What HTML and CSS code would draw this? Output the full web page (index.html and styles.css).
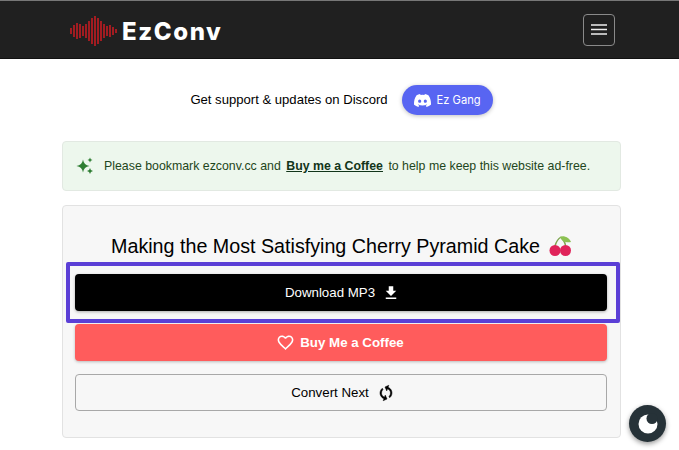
FILE: index.html
```html
<!DOCTYPE html>
<html lang="en">
<head>
    <meta charset="UTF-8">
    <meta name="viewport" content="width=device-width, initial-scale=1.0">
    <title>EzConv</title>
    <link rel="stylesheet" href="styles.css">
</head>
<body>
    <header class="topbar">
        <a href="#" class="logo">
            <svg class="logo-wave" width="48" height="30" viewBox="0 0 48 30">
                <path d="M1 12V18M4 9V21M7 7V23M10 8V22M13 10V20M16 8V22M19 5V25M22 2V28M25 0V30M28 2V28M31 5V25M34 8V22M37 10V20M40 9V21M43 11V19M46 13V17"/>
            </svg>
            <span class="logo-text">EzConv</span>
        </a>
        <button class="menu-btn" aria-label="Menu">
            <svg width="16" height="11" viewBox="0 0 16 11"><path d="M0 1H16M0 5.500H16M0 10H16"/></svg>
        </button>
    </header>

    <main class="page">
        <section class="support">
            <span class="support-text">Get support &amp; updates on Discord</span>
            <a href="#" class="discord-pill">
                <svg width="17" height="13" viewBox="0 0 127.14 96.36"><path d="M107.7,8.07A105.15,105.15,0,0,0,81.47,0a72.06,72.06,0,0,0-3.36,6.83A97.68,97.68,0,0,0,49,6.83,72.37,72.37,0,0,0,45.64,0,105.89,105.89,0,0,0,19.39,8.09C2.79,32.65-1.71,56.6.54,80.21h0A105.73,105.73,0,0,0,32.71,96.36,77.7,77.7,0,0,0,39.6,85.25a68.42,68.42,0,0,1-10.85-5.18c.91-.66,1.8-1.34,2.66-2a75.57,75.57,0,0,0,64.32,0c.87.71,1.76,1.39,2.66,2a68.68,68.68,0,0,1-10.87,5.19,77,77,0,0,0,6.89,11.1A105.25,105.25,0,0,0,126.6,80.22h0C129.24,52.84,122.09,29.11,107.7,8.07ZM42.45,65.69C36.18,65.69,31,60,31,53s5-12.74,11.43-12.74S54,46,53.89,53,48.84,65.69,42.45,65.69Zm42.24,0C78.41,65.69,73.25,60,73.25,53s5-12.74,11.44-12.74S96.23,46,96.12,53,91.08,65.69,84.69,65.69Z"/></svg>
                Ez Gang
            </a>
        </section>

        <section class="notice">
            <svg class="notice-icon" width="20" height="20" viewBox="0 0 20 20"><path d="M8 3.500Q8.800 9.200 14.500 10 8.800 10.800 8 16.500 7.200 10.800 1.500 10 7.200 9.200 8 3.500zM15 1.500Q15.300 3.700 17.500 4 15.300 4.300 15 6.500 14.700 4.300 12.500 4 14.700 3.700 15 1.500zM15 12Q15.400 14.600 18 15 15.400 15.400 15 18 14.600 15.400 12 15 14.600 14.600 15 12z"/></svg>
            <p>Please bookmark ezconv.cc and <a href="#">Buy me a Coffee</a> to help me keep this website ad-free.</p>
        </section>

        <section class="card">
            <h1>Making the Most Satisfying Cherry Pyramid Cake
                <svg class="cherry" width="22" height="22" viewBox="0 0 22 22">
                    <path class="stem" d="M6 11C7 7 9 4 12 2M16.500 11C16.500 8 14.500 5 12 2"/>
                    <path class="leaf" d="M11 2C14 0 20 2 22 7 18 8 13 7 11 2z"/>
                    <circle class="fruit" cx="6" cy="15.500" r="5.500"/>
                    <circle class="fruit" cx="16.500" cy="15.500" r="5.500"/>
                </svg>
            </h1>
            <div class="actions">
                <button class="btn btn-download">
                    Download MP3
                    <svg width="18" height="18" viewBox="0 0 24 24"><path d="M5 20h14v-2H5v2zM19 9h-4V3H9v6H5l7 7 7-7z"/></svg>
                    <span class="highlight"></span>
                </button>
                <button class="btn btn-coffee">
                    <svg width="19" height="19" viewBox="0 0 24 24"><path d="M16.500 3c-1.740 0-3.410.81-4.500 2.090C10.910 3.810 9.240 3 7.500 3 4.420 3 2 5.420 2 8.500c0 3.780 3.400 6.860 8.550 11.540L12 21.350l1.450-1.320C18.600 15.360 22 12.280 22 8.500 22 5.420 19.580 3 16.500 3zm-4.400 15.550l-.1.1-.1-.1C7.140 14.240 4 11.390 4 8.500 4 6.500 5.500 5 7.500 5c1.540 0 3.040.99 3.570 2.360h1.870C13.460 5.990 14.960 5 16.500 5c2 0 3.500 1.500 3.500 3.500 0 2.890-3.140 5.740-7.900 10.050z"/></svg>
                    Buy Me a Coffee
                </button>
                <button class="btn btn-next">
                    Convert Next
                    <svg class="sync-icon" width="18" height="18" viewBox="0 0 24 24"><path d="M12 4V1L8 5l4 4V6c3.310 0 6 2.690 6 6 0 1.010-.25 1.970-.7 2.800l1.460 1.460C19.540 15.030 20 13.570 20 12c0-4.420-3.580-8-8-8zm0 14c-3.310 0-6-2.690-6-6 0-1.010.25-1.970.7-2.800L5.240 7.740C4.460 8.970 4 10.430 4 12c0 4.420 3.580 8 8 8v3l4-4-4-4v3z"/></svg>
                </button>
            </div>
        </section>
    </main>

    <button class="theme-btn" aria-label="Dark mode">
        <svg width="22" height="22" viewBox="0 0 22 22">
            <circle class="moon" cx="11" cy="11" r="9.500"/>
            <circle class="bite" cx="15" cy="5.500" r="5.500"/>
        </svg>
    </button>
</body>
</html>
```

FILE: styles.css
```css
* {
    box-sizing: border-box;
}

html, body {
    height: 100%;
}

body {
    font-family: "Liberation Sans", Arial, sans-serif;
    margin: 0;
    padding: 0;
    background-color: #fff;
    color: #000;
    overflow: hidden;
}

a {
    color: inherit;
}

/* header */
.topbar {
    height: 59px;
    padding: 0 64px 0 70px;
    display: flex;
    align-items: center;
    justify-content: space-between;
    background-color: #202020;
    border-top: 1px solid #777;
    border-bottom: 1px solid #111;
}

.logo {
    padding-top: 3px;
    display: flex;
    align-items: center;
    gap: 4px;
    text-decoration: none;
}

.logo-wave path {
    fill: none;
    stroke: #b01c22;
    stroke-width: 1.800;
}

.logo-text {
    font-family: Inter, sans-serif;
    font-size: 24px;
    font-weight: 800;
    letter-spacing: 1.600px;
    color: #fff;
}

.menu-btn {
    width: 32px;
    height: 32px;
    padding: 0;
    display: flex;
    align-items: center;
    justify-content: center;
    background: none;
    border: 1px solid #8a8a8a;
    border-radius: 4px;
}

.menu-btn path {
    fill: none;
    stroke: #eee;
    stroke-width: 1.500;
}

/* main */
.page {
    padding: 0 58px 0 62px;
}

.support {
    height: 82px;
    display: flex;
    align-items: center;
    justify-content: center;
    gap: 14px;
    font-size: 13.100px;
}

.support-text {
    margin-bottom: 2px;
}

.discord-pill {
    width: 91px;
    height: 30px;
    display: flex;
    align-items: center;
    justify-content: center;
    gap: 6px;
    font-family: Inter, sans-serif;
    font-size: 11.200px;
    color: #fff;
    text-decoration: none;
    background-color: #5865f2;
    border-radius: 15px;
    box-shadow: 0 1px 4px rgba(0, 0, 0, 0.25);
}

.discord-pill svg {
    fill: #fff;
}

.notice {
    height: 50px;
    padding: 0 12px;
    display: flex;
    align-items: center;
    gap: 9px;
    background-color: #edf7ed;
    border: 1px solid #e2e9e2;
    border-radius: 4px;
    font-size: 12.350px;
    color: #1e4620;
}

.notice p {
    margin: 0;
}

.notice a {
    margin: 0 2px;
    font-weight: bold;
    color: #12351a;
}

.notice-icon {
    fill: #2e7d32;
}

.card {
    height: 233px;
    margin-top: 14px;
    padding: 28px 13px 0 12px;
    background-color: #f7f7f7;
    border: 1px solid #e2e2e2;
    border-radius: 4px;
}

.card h1 {
    margin: 0 0 16px;
    display: flex;
    align-items: center;
    justify-content: center;
    gap: 9px;
    font-size: 19.700px;
    font-weight: normal;
    line-height: 24px;
}

.cherry .stem {
    fill: none;
    stroke: #7fa650;
    stroke-width: 1.500;
}

.cherry .leaf {
    fill: #8cc152;
}

.cherry .fruit {
    fill: #e0245a;
}

.actions {
    display: flex;
    flex-direction: column;
    gap: 13px;
}

.btn {
    position: relative;
    width: 100%;
    height: 37px;
    display: flex;
    align-items: center;
    justify-content: center;
    gap: 7px;
    border: none;
    border-radius: 4px;
    font-family: inherit;
    font-size: 13.300px;
}

.btn-download {
    padding-left: 9px;
    color: #fff;
    background-color: #000;
    box-shadow: 0 1px 3px rgba(0, 0, 0, 0.3);
}

.btn-download svg,
.btn-coffee svg {
    fill: #fff;
}

/* purple frame drawn on top of the download button */
.highlight {
    position: absolute;
    top: -12px;
    right: -13px;
    bottom: -12px;
    left: -9px;
    border: 4px solid #5b3fd6;
    border-radius: 2px;
}

.btn-coffee {
    padding-right: 8px;
    gap: 5px;
    font-weight: bold;
    color: #fff;
    background-color: #ff5c5c;
    box-shadow: 0 1px 3px rgba(0, 0, 0, 0.25);
}

.btn-next {
    padding-left: 10px;
    gap: 8px;
    color: #000;
    background-color: #f7f7f7;
    border: 1px solid #a8a8a8;
}

.sync-icon {
    transform: rotate(20deg);
    stroke: #000;
    stroke-width: 0.600;
}

.theme-btn {
    position: fixed;
    right: 13px;
    bottom: 8px;
    width: 37px;
    height: 37px;
    padding: 0;
    display: flex;
    align-items: center;
    justify-content: center;
    background-color: #263238;
    border: none;
    border-radius: 50%;
    box-shadow: 0 2px 5px rgba(0, 0, 0, 0.4);
}

.theme-btn .moon {
    fill: #fff;
}

.theme-btn .bite {
    fill: #263238;
}
```
